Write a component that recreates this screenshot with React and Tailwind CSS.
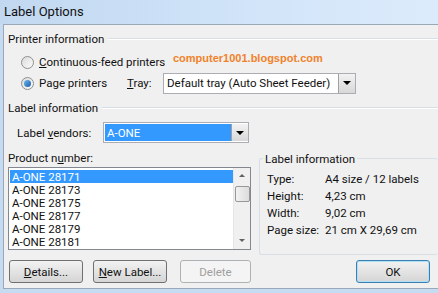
import React from "react";

const items = ["A-ONE 28171", "A-ONE 28173", "A-ONE 28175", "A-ONE 28177", "A-ONE 28179", "A-ONE 28181"];

function Radio({ checked }) {
  return (
    <span className="w-[13px] h-[13px] rounded-full border border-[#8e8f8f] bg-gradient-to-br from-[#dcdcdc] to-[#fafafa] flex items-center justify-center shrink-0">
      {checked && <span className="w-[7px] h-[7px] rounded-full bg-gradient-to-br from-[#6cb7f0] to-[#1a5fa8]" />}
    </span>
  );
}

function DropBtn() {
  return (
    <span className="w-[17px] self-stretch border-l border-[#a0a0a0] bg-gradient-to-b from-[#f2f2f2] to-[#d8d8d8] flex items-center justify-center">
      <span className="w-0 h-0 border-l-[4px] border-r-[4px] border-t-[4px] border-l-transparent border-r-transparent border-t-black" />
    </span>
  );
}

function Heading({ children }) {
  return (
    <div className="flex items-center gap-1 h-[14px]">
      <span className="shrink-0">{children}</span>
      <span className="flex-1 border-t border-[#d5dfe5] border-b border-b-white" />
    </div>
  );
}

function Btn({ children, disabled, def, w }) {
  return (
    <div
      className={
        "h-[23px] rounded-[3px] border flex items-center justify-center " +
        (def
          ? "border-[#3c7fb1] shadow-[inset_0_0_0_1px_#aee0f8] bg-gradient-to-b from-[#f2f2f2] to-[#d5d5d5] "
          : disabled
          ? "border-[#adb2b5] bg-[#f4f4f4] text-[#a0a0a0] "
          : "border-[#707070] bg-gradient-to-b from-[#f2f2f2] to-[#d5d5d5] ") +
        w
      }
    >
      {children}
    </div>
  );
}

export default function App() {
  return (
    <div className="w-[438px] h-[293px] overflow-hidden bg-[#c4dbf2] text-[11.5px] leading-[14px] text-[#111]" style={{ fontFamily: "Roboto, 'Noto Sans', sans-serif" }}>
      {/* title bar */}
      <div className="h-[24px] flex items-center pl-[4px] bg-gradient-to-r from-[#c1d8f0] via-[#cfe3f8] to-[#dcebfb] text-[13px]">
        Label Options
      </div>
      <div className="flex h-[265px]">
        <div className="w-[3px] bg-[#c4dbf2]" />
        <div className="flex-1 bg-[#f0f0f0] border-t border-[#5d6e82] border-l border-[#9aa8b8] border-b border-b-[#9aa8b8] pl-[4px] pt-[7px]">
          <Heading>Printer information</Heading>

          <div className="relative h-[44px] mt-[4px]">
            <div className="absolute left-[165px] top-[1px] text-[#f0822a] font-bold text-[11px]" style={{ fontFamily: "'Liberation Sans', Arial, sans-serif" }}>
              computer1001.blogspot.com
            </div>
            <div className="flex items-center gap-[5px] pl-[13px] h-[22px] pt-[2px]">
              <Radio />
              <span><u>C</u>ontinuous-feed printers</span>
            </div>
            <div className="flex items-center pl-[13px] h-[22px]">
              <Radio checked />
              <span className="ml-[5px] w-[88px]">Pa<u>g</u>e printers</span>
              <span className="w-[36px]"><u>T</u>ray:</span>
              <div className="w-[193px] h-[21px] border border-[#abadb3] bg-white flex items-center">
                <span className="flex-1 pl-[3px]">Default tray (Auto Sheet Feeder)</span>
                <DropBtn />
              </div>
            </div>
          </div>

          <div className="mt-[7px]">
            <Heading>Label information</Heading>
          </div>

          <div className="flex items-center pl-[9px] h-[21px] mt-[7px]">
            <span className="w-[86px]">Label <u>v</u>endors:</span>
            <div className="w-[146px] h-[21px] border border-[#abadb3] bg-white flex items-center p-[1px] pr-0">
              <span className="flex-1 self-stretch bg-[#3399ff] text-white pl-[2px] flex items-center">A-ONE</span>
              <DropBtn />
            </div>
          </div>

          <div className="flex mt-[8px] gap-[8px]">
            <div className="w-[243px]">
              <div className="h-[14px]">Product n<u>u</u>mber:</div>
              <div className="mt-[2px] h-[83px] border border-[#828790] bg-white flex">
                <div className="flex-1 pt-[2px] pl-[1px]">
                  {items.map((it, i) => (
                    <div key={it} className={"h-[13px] pl-[2px] flex items-center " + (i === 0 ? "bg-[#3399ff] text-white" : "")}>
                      {it}
                    </div>
                  ))}
                </div>
                <div className="w-[17px] flex flex-col items-center bg-[#f0f0f0] border-l border-[#e6e6e6]">
                  <span className="mt-[6px] w-0 h-0 border-l-[3px] border-r-[3px] border-b-[3px] border-l-transparent border-r-transparent border-b-[#606060]" />
                  <span className="mt-[9px] w-[15px] h-[16px] rounded-[2px] border border-[#979797] bg-gradient-to-r from-[#f2f2f2] to-[#dcdcdc]" />
                  <span className="mt-auto mb-[7px] w-0 h-0 border-l-[3px] border-r-[3px] border-t-[3px] border-l-transparent border-r-transparent border-t-[#606060]" />
                </div>
              </div>
            </div>
            <div className="flex-1 relative mt-[7px] h-[97px] border border-[#d5dfe5] rounded-[3px] border-r-0">
              <span className="absolute -top-[7px] left-[3px] bg-[#f0f0f0] px-[2px]">Label information</span>
              <div className="grid grid-cols-[58px_1fr] gap-y-[3px] pl-[7px] pt-[13px]">
                <span>Type:</span><span>A4 size / 12 labels</span>
                <span>Height:</span><span>4,23 cm</span>
                <span>Width:</span><span>9,02 cm</span>
                <span>Page size:</span><span>21 cm X 29,69 cm</span>
              </div>
            </div>
          </div>

          <div className="flex items-center mt-[5px] pl-[1px]">
            <Btn w="w-[74px]"><u>D</u>etails...</Btn>
            <div className="w-[10px]" />
            <Btn w="w-[74px]"><u>N</u>ew Label...</Btn>
            <div className="w-[13px]" />
            <Btn w="w-[71px]" disabled>Delete</Btn>
            <div className="w-[105px]" />
            <Btn w="w-[74px]" def>OK</Btn>
          </div>
        </div>
      </div>
    </div>
  );
}
